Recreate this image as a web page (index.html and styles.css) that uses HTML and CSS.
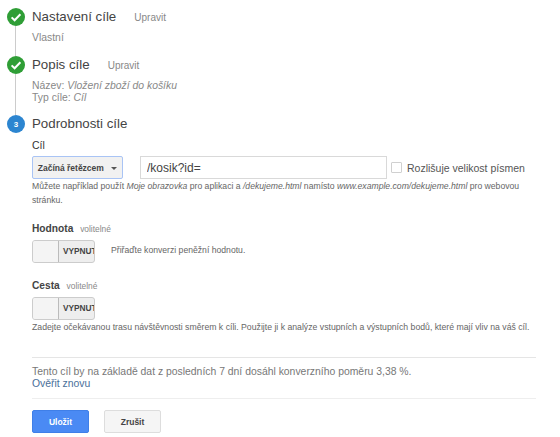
FILE: index.html
```html
<!DOCTYPE html>
<html lang="cs">
<head>
  <meta charset="UTF-8">
  <title>Podrobnosti cíle</title>
  <meta name="viewport" content="width=device-width, initial-scale=1">
  <link rel="stylesheet" href="styles.css">
</head>
<body>

  <div class="step step-one">
    <div class="rail">
      <span class="badge done">
        <svg viewBox="0 0 18 18" width="18" height="18"><path d="M4.6 9.4l3 2.9 5.8-6" fill="none" stroke="#fff" stroke-width="2"/></svg>
      </span>
      <span class="line"></span>
    </div>
    <div class="step-body">
      <div class="step-head"><h2>Nastavení cíle</h2><a class="edit">Upravit</a></div>
      <p class="summary summary-gap">Vlastní</p>
    </div>
  </div>

  <div class="step step-two">
    <div class="rail">
      <span class="badge done">
        <svg viewBox="0 0 18 18" width="18" height="18"><path d="M4.6 9.4l3 2.9 5.8-6" fill="none" stroke="#fff" stroke-width="2"/></svg>
      </span>
      <span class="line"></span>
    </div>
    <div class="step-body">
      <div class="step-head"><h2>Popis cíle</h2><a class="edit">Upravit</a></div>
      <p class="summary summary-gap">Název: <em>Vložení zboží do košíku</em></p>
      <p class="summary">Typ cíle: <em>Cíl</em></p>
    </div>
  </div>

  <div class="step">
    <div class="rail">
      <span class="badge current">3</span>
    </div>
    <div class="step-body">
      <div class="step-head"><h2>Podrobnosti cíle</h2></div>

      <div class="field-label goal-label">Cíl</div>
      <div class="match-row">
        <button type="button" class="match-select">Začíná řetězcem <span class="caret"></span></button>
        <input type="text" class="match-input" value="/kosik?id=">
        <label class="case-check"><span class="checkbox"></span>Rozlišuje velikost písmen</label>
      </div>
      <p class="hint hint-wrap">Můžete například použít <em>Moje obrazovka</em> pro aplikaci a <em>/dekujeme.html</em> namísto <em>www.example.com/dekujeme.html</em> pro webovou stránku.</p>

      <div class="field-label value-label">Hodnota <small>volitelné</small></div>
      <div class="toggle-row">
        <div class="toggle"><span class="knob"></span><span class="toggle-text">VYPNUTO</span></div>
        <span class="hint">Přiřaďte konverzi peněžní hodnotu.</span>
      </div>

      <div class="field-label path-label">Cesta <small>volitelné</small></div>
      <div class="toggle"><span class="knob"></span><span class="toggle-text">VYPNUTO</span></div>
      <p class="hint path-hint">Zadejte očekávanou trasu návštěvnosti směrem k cíli. Použijte ji k analýze vstupních a výstupních bodů, které mají vliv na váš cíl.</p>

      <div class="verify">
        <p>Tento cíl by na základě dat z posledních 7 dní dosáhl konverzního poměru 3,38 %.</p>
        <a>Ověřit znovu</a>
      </div>

      <div class="actions">
        <button type="button" class="btn btn-save">Uložit</button>
        <button type="button" class="btn btn-cancel">Zrušit</button>
      </div>
    </div>
  </div>

</body>
</html>
```

FILE: styles.css
```css
body {
  margin: 0;
  padding: 8px 24px 0 7px;
  font-family: "Liberation Sans", Arial, sans-serif;
  font-size: 12px;
  color: #444;
  background: #fff;
  overflow: hidden;
}
p, h2 {
  margin: 0;
}
.step {
  display: flex;
}
.step-one {
  height: 48px;
}
.step-two {
  height: 59px;
}
.rail {
  width: 25px;
  flex: none;
  display: flex;
  flex-direction: column;
}
.badge {
  width: 18px;
  height: 18px;
  border-radius: 50%;
  flex: none;
  display: flex;
  align-items: center;
  justify-content: center;
  color: #fff;
  font-size: 8px;
  font-weight: bold;
}
.badge.done {
  background: #2f9e36;
}
.badge.current {
  background: #2c85d0;
}
.line {
  width: 1px;
  flex: 1;
  margin-left: 8px;
  background: #ccc;
}
.step-body {
  flex: 1;
  min-width: 0;
}
.step-head {
  display: flex;
  align-items: baseline;
  height: 18px;
}
.step-head h2 {
  font-size: 13.3px;
  line-height: 18px;
  font-weight: normal;
  color: #444;
}
.edit {
  margin-left: 18px;
  font-size: 10px;
  color: #888;
}
.summary {
  font-size: 10.4px;
  line-height: 12px;
  color: #888;
}
.summary-gap {
  margin-top: 6px;
}
.field-label {
  font-size: 10.2px;
  line-height: 14px;
  font-weight: bold;
  color: #444;
}
.field-label small {
  margin-left: 4px;
  font-size: 8.4px;
  font-weight: normal;
  color: #888;
}
.goal-label {
  margin-top: 5px;
  font-size: 10.5px;
  font-weight: normal;
  color: #333;
}
.match-row {
  display: flex;
  align-items: center;
  margin-top: 4px;
}
.match-select {
  width: 91px;
  height: 23px;
  padding: 0;
  border: 1px solid #a9c4f5;
  border-radius: 2px;
  background: #f1f1f1;
  font: bold 8.5px "Liberation Sans", Arial, sans-serif;
  color: #444;
}
.caret {
  display: inline-block;
  margin-left: 5px;
  vertical-align: middle;
  border-top: 3px solid #555;
  border-left: 3px solid transparent;
  border-right: 3px solid transparent;
}
.match-input {
  width: 233px;
  height: 21px;
  margin-left: 17px;
  padding: 0 6px;
  border: 1px solid #d9d9d9;
  font: 12px "Liberation Sans", Arial, sans-serif;
  color: #444;
  outline: none;
}
.case-check {
  display: flex;
  align-items: center;
  margin-left: 4px;
  font-size: 10.5px;
  color: #555;
  white-space: nowrap;
}
.checkbox {
  width: 9px;
  height: 9px;
  margin-right: 5px;
  border: 1px solid #d0d0d0;
  border-radius: 1px;
}
.hint {
  font-size: 8.65px;
  color: #666;
}
.hint-wrap {
  line-height: 14px;
  width: 495px;
}
.value-label {
  margin-top: 15px;
}
.toggle-row {
  display: flex;
  align-items: center;
  gap: 16px;
}
.toggle {
  width: 63px;
  height: 23px;
  margin-top: 4px;
  flex: none;
  display: flex;
  overflow: hidden;
  border: 1px solid #ccc;
  border-radius: 3px;
  background: #eee;
  box-sizing: border-box;
}
.knob {
  width: 25px;
  flex: none;
  background: #f4f4f4;
  border-right: 1px solid #bbb;
}
.toggle-text {
  margin-left: 4px;
  font-size: 8.3px;
  line-height: 21px;
  font-weight: bold;
  white-space: nowrap;
  color: #444;
}
.path-label {
  margin-top: 16px;
}
.path-hint {
  margin-top: 1px;
  font-size: 8.7px;
  line-height: 12px;
  white-space: nowrap;
}
.verify {
  margin-top: 24px;
  padding: 8px 0;
  border-top: 1px solid #e5e5e5;
  border-bottom: 1px solid #eee;
  font-size: 10.4px;
  line-height: 12px;
  color: #777;
}
.verify a {
  color: #4a6f9a;
}
.actions {
  display: flex;
  gap: 15px;
  margin-top: 11px;
}
.btn {
  width: 57px;
  height: 23px;
  padding: 0;
  border-radius: 2px;
  font: bold 8.5px "Liberation Sans", Arial, sans-serif;
}
.btn-save {
  border: 1px solid #3f7fe8;
  background: #4a8af4;
  color: #fff;
}
.btn-cancel {
  border: 1px solid #ddd;
  background: #f5f5f5;
  color: #444;
}
```
